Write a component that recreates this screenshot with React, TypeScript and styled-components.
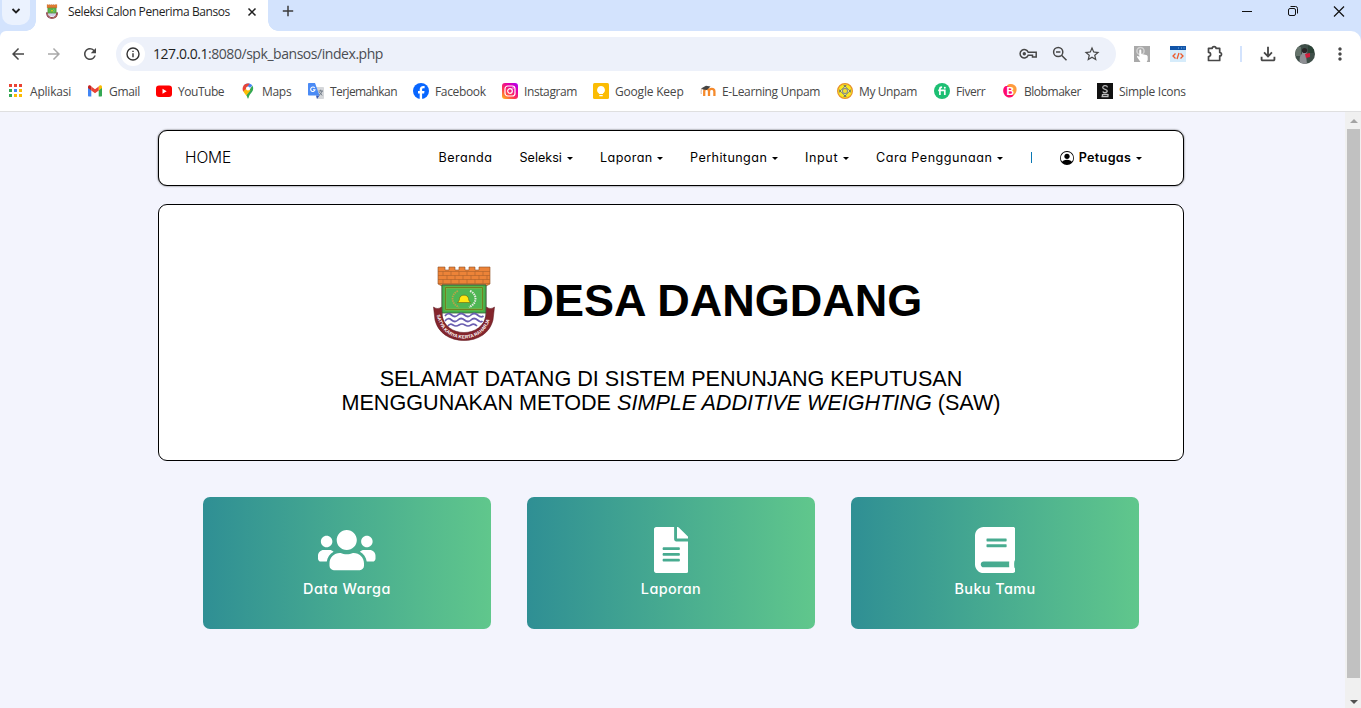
import React from "react";
import styled, { createGlobalStyle, css } from "styled-components";
import { FaBook, FaFileAlt, FaUsers } from "react-icons/fa";
import { BsPersonCircle } from "react-icons/bs";
import {
  MdArrowBack,
  MdArrowForward,
  MdMoreVert,
  MdOutlineFileDownload,
  MdRefresh,
  MdStarOutline,
} from "react-icons/md";

const UI_FONT = `"Open Sans", "Noto Sans", sans-serif`;
const PAGE_FONT = `Inter, "Open Sans", sans-serif`;

const GlobalStyle = createGlobalStyle`
  *, *::before, *::after { box-sizing: border-box; }
  body { margin: 0; overflow: hidden; font-family: ${UI_FONT}; }
  svg { display: block; flex: none; }
  h1, h2, p { margin: 0; }
`;

const Window = styled.div`
  display: flex;
  flex-direction: column;
  width: 1361px;
  height: 708px;
  background: #d3e3fd;
`;

/* ---------- Tab strip ---------- */

const TabStrip = styled.header`
  display: flex;
  height: 31px;
  flex: none;
`;

const TabSearch = styled.button`
  display: grid;
  place-items: center;
  width: 28px;
  height: 25px;
  margin: 0 6px 0 2px;
  padding: 0 0 3px;
  border: 0;
  border-radius: 0 0 10px 10px;
  background: #ebf2fe;
`;

const Tab = styled.div`
  position: relative;
  display: flex;
  align-items: center;
  width: 232px;
  height: 31px;
  padding: 0 11px 8px 10px;
  background: #fff;

  &::before,
  &::after {
    content: "";
    position: absolute;
    bottom: 0;
    width: 10px;
    height: 10px;
  }
  &::before {
    left: -10px;
    background: radial-gradient(circle at 0 0, transparent 9.5px, #fff 10px);
  }
  &::after {
    right: -10px;
    background: radial-gradient(circle at 100% 0, transparent 9.5px, #fff 10px);
  }
`;

const TabTitle = styled.span`
  width: 181px;
  margin-left: 10px;
  padding-top: 1px;
  color: #1f1f1f;
  font-size: 12px;
  line-height: 18px;
  letter-spacing: -0.4px;
  white-space: nowrap;
`;

const TabGap = styled.div`
  width: 14px;
`;

const NewTab = styled.div`
  flex: 1;
  padding-top: 5px;
`;

const WindowControls = styled.div`
  display: flex;
  gap: 34px;
  padding: 5px 16px 0 0;
`;

/* ---------- Toolbar ---------- */

const Chrome = styled.div`
  flex: none;
  height: 81px;
  border-bottom: 1px solid #dfdfe0;
  border-radius: 6px 10px 0 0;
  background: #fff;
`;

const Toolbar = styled.div`
  display: flex;
  align-items: center;
  height: 46px;
  color: #474747;
`;

const NavButtons = styled.div`
  display: flex;
  gap: 18px;
  width: 116px;
  padding-left: 9px;
`;

const Dim = styled.span`
  color: #a9a9a9;
`;

const AddressBar = styled.div`
  display: flex;
  align-items: center;
  width: 1000px;
  height: 34px;
  padding: 0 15px 0 5px;
  border-radius: 17px;
  background: #edf1fa;
`;

const SiteInfo = styled.span`
  display: grid;
  place-items: center;
  width: 24px;
  height: 24px;
  border-radius: 50%;
  background: #fff;
`;

const Url = styled.span`
  flex: 1;
  margin-left: 8px;
  color: #4a4d52;
  font-size: 14px;
  line-height: 20px;
  letter-spacing: -0.45px;
  white-space: nowrap;
`;

const Host = styled.span`
  color: #1f1f1f;
`;

const AddressActions = styled.span`
  display: flex;
  align-items: center;
  gap: 15px;
`;

const Extensions = styled.div`
  display: flex;
  align-items: center;
  gap: 20px;
  padding-left: 18px;
`;

const ToolDivider = styled.i`
  width: 2px;
  height: 16px;
  margin: 0 15px 0 16px;
  background: #d3e3fd;
`;

const EndTools = styled.div`
  display: flex;
  align-items: center;
  gap: 15.5px;
`;

/* ---------- Bookmarks ---------- */

const Bookmarks = styled.nav`
  display: flex;
  gap: 16px;
  height: 28px;
  padding-left: 8px;
`;

const Bookmark = styled.a`
  display: flex;
  align-items: center;
  gap: 6px;
`;

const BookmarkText = styled.span<{ $width: number; $tracking: number }>`
  width: ${(p) => p.$width}px;
  padding-top: 1px;
  color: #474747;
  font-size: 12px;
  line-height: 16px;
  letter-spacing: ${(p) => p.$tracking}px;
  white-space: nowrap;
`;

/* ---------- Page ---------- */

const Viewport = styled.div`
  display: flex;
  flex: 1;
  min-height: 0;
  background: #f3f4fd;
`;

const Page = styled.main`
  flex: 1;
  padding: 18px 0 0 158px;
  color: #000;
  font-family: ${PAGE_FONT};
  font-feature-settings: "cv11";
`;

const panel = css`
  width: 1026px;
  border: 1px solid #000;
  border-radius: 9px;
  background: #fff;
`;

const Navbar = styled.nav`
  ${panel}
  display: flex;
  align-items: center;
  height: 56px;
  padding: 0 41px 0 26px;
  box-shadow: 0 0 2px rgba(0, 0, 0, 0.75);
`;

const Brand = styled.a`
  width: 253.5px;
  padding-bottom: 2px;
  font-size: 15.6px;
  font-weight: 350;
  letter-spacing: -0.15px;
`;

const MenuItem = styled.a<{ $width: number; $tracking: number; $last?: boolean }>`
  display: flex;
  align-items: center;
  justify-content: space-between;
  width: ${(p) => p.$width}px;
  margin-right: ${(p) => (p.$last ? 0 : 27)}px;
  font-size: 12.6px;
  font-weight: ${(p) => (p.$last ? 600 : 370)};
  line-height: 20px;
  letter-spacing: ${(p) => p.$tracking}px;
  white-space: nowrap;
`;

const Caret = styled.i`
  border: 3px solid transparent;
  border-top-color: #000;
  border-bottom: 0;
`;

const MenuDivider = styled.i`
  width: 1px;
  height: 11px;
  margin: 0 28px 2px 1px;
  background: #0a78b4;
`;

const Hero = styled.section`
  ${panel}
  height: 257px;
  margin-top: 18px;
  padding-top: 61px;
  font-family: "Liberation Sans", Arial, sans-serif;
`;

const HeroHeading = styled.div`
  display: flex;
  align-items: center;
  padding-left: 274px;
`;

const HeroTitle = styled.h1`
  padding-bottom: 5px;
  margin-left: 26.5px;
  font-size: 45px;
  line-height: 54px;
  white-space: nowrap;
`;

const Welcome = styled.p`
  margin-top: 26px;
  font-size: 21.6px;
  line-height: 24px;
  text-align: center;
`;

const Cards = styled.section`
  display: flex;
  gap: 36px;
  margin-top: 36px;
  padding-left: 45px;
`;

const Card = styled.a<{ $iconWidth: number }>`
  display: flex;
  flex-direction: column;
  align-items: center;
  width: 288px;
  height: 132px;
  padding-top: 30px;
  border-radius: 7px;
  background: linear-gradient(90deg, #2f8f94, #60c78c);
  color: #fff;

  svg {
    width: ${(p) => p.$iconWidth}px;
    height: 46px;
  }
`;

const CardLabel = styled.span<{ $tracking: number }>`
  margin-top: 5px;
  font-size: 14.4px;
  font-weight: 450;
  line-height: 22px;
  letter-spacing: ${(p) => p.$tracking}px;
`;

const Scrollbar = styled.div`
  display: flex;
  flex-direction: column;
  align-items: center;
  width: 16px;
  height: 100%;
  padding: 7px 0 4px 1px;
  background: #f0f0f0;
`;

const ScrollThumb = styled.div`
  width: 13px;
  height: 549px;
  margin: 6px 0 auto;
  background: #c1c1c1;
`;

const ScrollArrow = styled.i<{ $down?: boolean }>`
  border: 4px solid transparent;
  ${(p) =>
    p.$down
      ? css`
          border-top-color: #505050;
          border-bottom: 0;
        `
      : css`
          border-bottom-color: #a3a3a3;
          border-top: 0;
        `}
`;

/* ---------- Drawings ---------- */

const Emblem = ({ width, height }: { width: number; height: number }) => (
  <svg width={width} height={height} viewBox="0 0 62 75">
    <path
      d="M5 1h7v3h4V1h6v3h4V1h6v3h4V1h6v3h4V1h11v17l-4 2H9l-4-2z"
      fill="#ec8338"
      stroke="#8d4f22"
      strokeWidth=".6"
    />
    <path
      d="M5 5.500h52M5 9.500h52M5 13.500h52M5 17.500h52M10 5.500v4m8-4v4m8-4v4m8-4v4m8-4v4m8-4v4M14 9.500v4m8-4v4m8-4v4m8-4v4m8-4v4m8-4v4M10 13.500v4m8-4v4m8-4v4m8-4v4m8-4v4m8-4v4"
      stroke="#a9602c"
      strokeWidth=".6"
    />
    <path d="M9 19h44v27c0 14-9 22-22 25-13-3-22-11-22-25z" fill="#fff" stroke="#666" strokeWidth=".8" />
    <path d="M9 19h44v28H9z" fill="#43b04c" stroke="#3b5b32" strokeWidth=".8" />
    <path d="M12.500 21.500h37v22h-37z" fill="#4fb654" stroke="#b9bf2c" strokeWidth="1.300" />
    <path d="M12.500 21.500h37v22h-37z" fill="none" stroke="#25401b" strokeWidth=".5" />
    <path d="M25 25c-7.500 3-7.500 13 1 16" fill="none" stroke="#b9a347" strokeWidth="1.800" strokeDasharray="1.500 .8" />
    <path d="M37 25c7.500 3 7.500 13-1 16" fill="none" stroke="#e6ece2" strokeWidth="2" strokeDasharray="1.500 .8" />
    <path d="M24.500 36.500c1-1 2-2 2-4 .5-4.500 8.500-4.500 9 0 0 2 1 3 2 4z" fill="#ffe713" stroke="#6a6412" strokeWidth=".6" />
    <path
      d="M12 50q3-4 6.500-1t6.500 0 6.500 0 6.500 0 6.500 0 6 1M12 55q3-4 6.500-1t6.500 0 6.500 0 6.500 0 6.500 0 5 1M15 60q2-3 5-1t6 0 6 0 6 0 6 1"
      fill="none"
      stroke="#6a5eb0"
      strokeWidth="1.700"
    />
    <path
      d="M.5 41c3 2 5 2 8 0l.5 9c2 10 11 16.500 22 16.500S51 60 53 50l.5-9c3 2 5 2 8 0L60 54C57 67 45 74.500 31 74.500S5 67 2 54z"
      fill="#84252c"
      stroke="#5a171c"
      strokeWidth=".5"
    />
    <path id="ribbon" d="M3.500 48C7 65 18 72.500 31 72.500s24-7.500 27.500-24.500" fill="none" />
    <text fill="#fff" fontSize="4.700" fontWeight="700" fontFamily="Liberation Sans, sans-serif">
      <textPath href="#ribbon" startOffset="1">SATYA KARYA KERTA RAHARJA</textPath>
    </text>
  </svg>
);

const AppsIcon = () => (
  <svg width="16" height="16" viewBox="0 0 16 16">
    {["#ea4335", "#ea4335", "#ea4335", "#34a853", "#4285f4", "#fbbc04", "#34a853", "#fbbc04", "#fbbc04"].map((fill, i) => (
      <rect key={i} x={1 + (i % 3) * 5} y={1 + Math.floor(i / 3) * 5} width="3" height="3" fill={fill} />
    ))}
  </svg>
);

const GmailIcon = () => (
  <svg width="16" height="16" viewBox="0 0 16 16">
    <path d="M1 4v8.500c0 .6.4 1 1 1h2.300V7z" fill="#4285f4" />
    <path d="M15 4v8.500c0 .6-.4 1-1 1h-2.300V7z" fill="#34a853" />
    <path d="M11.700 3.500V7.500L15 5V3.800c0-1.500-1.600-2-2.500-1.200z" fill="#fbbc04" />
    <path d="M4.300 7.500v-4L8 6.200l3.700-2.700v4L8 10.300z" fill="#ea4335" />
    <path d="M1 3.800V5l3.300 2.500v-4l-.8-.9C2.600 1.800 1 2.300 1 3.800z" fill="#c5221f" />
  </svg>
);

const YouTubeIcon = () => (
  <svg width="16" height="16" viewBox="0 0 16 16">
    <rect y="2.500" width="16" height="11.500" rx="3" fill="#f00" />
    <path d="M6.500 5.800v5l4.200-2.500z" fill="#fff" />
  </svg>
);

const MapsIcon = () => (
  <svg width="16" height="16" viewBox="0 0 16 16">
    <path d="M12.300 2.500c1.600 2.500.9 4.800-.4 6.600-1.200 1.700-2.800 3.300-3.400 5.900-.2.800-.8.800-1 0-.2-1-.7-2-1.300-2.800z" fill="#34a853" />
    <path d="M3.200 8.300 6.500 5l4 2.500-4.300 5C5.300 11 4 9.900 3.200 8.300z" fill="#fbbc04" />
    <path d="M3.900 2.300 6.800 5l-3.600 3.600C2.200 6.600 2.400 4.100 3.900 2.300z" fill="#ea4335" />
    <path d="M3.800 2.400C5.800 0 10.200-.2 12.200 2.500L9 6 6.600 4.800z" fill="#4285f4" />
    <path d="M3.700 2.500 6.500 5 9.600.8C7.300.1 5 .9 3.700 2.500z" fill="#ea4335" />
    <circle cx="8" cy="5.500" r="2" fill="#fff" />
  </svg>
);

const TranslateIcon = () => (
  <svg width="16" height="16" viewBox="0 0 16 16">
    <path d="M7 4h8.200c.5 0 .8.300.8.800v10.400c0 .5-.3.800-.8.800H9z" fill="#d5d7da" />
    <path d="M8 12.500h3.500L9 16z" fill="#3457b5" />
    <path d="M.8 0H7l4.500 12.500H.8c-.5 0-.8-.3-.8-.8V.8C0 .3.300 0 .8 0z" fill="#4b8bf5" />
    <path d="M6.700 5A2.200 2.200 0 1 0 7 6.800H5" fill="none" stroke="#fff" strokeWidth="1.100" />
    <path d="M10.500 8h4.500M12.700 6.700V8M14 8c-.3 2-1.500 3.400-3 4.300M11.500 9c.5 1.500 1.500 2.500 2.800 3.300" fill="none" stroke="#66727f" strokeWidth=".9" />
  </svg>
);

const FacebookIcon = () => (
  <svg width="16" height="16" viewBox="0 0 16 16">
    <circle cx="8" cy="8" r="8" fill="#0866ff" />
    <path d="M6.700 16v-5.500H5V8h1.700V6.800c0-2.700 1.200-3.900 3.800-3.900l1.100.1v2.300h-.9c-1.200 0-1.600.4-1.600 1.500V8h2.400l-.4 2.500h-2V16z" fill="#fff" />
  </svg>
);

const InstagramIcon = () => (
  <svg width="16" height="16" viewBox="0 0 16 16">
    <defs>
      <linearGradient id="insta" x1="0" y1="1" x2=".8" y2="0">
        <stop offset="0" stopColor="#ffc21a" />
        <stop offset=".4" stopColor="#ff3b4e" />
        <stop offset=".75" stopColor="#e600a5" />
        <stop offset="1" stopColor="#b600e8" />
      </linearGradient>
    </defs>
    <rect width="16" height="16" rx="3" fill="url(#insta)" />
    <rect x="3" y="3" width="10" height="10" rx="2.800" fill="none" stroke="#fff" strokeWidth="1.200" />
    <circle cx="8" cy="8" r="2.300" fill="none" stroke="#fff" strokeWidth="1.200" />
    <circle cx="11" cy="5" r=".7" fill="#fff" />
  </svg>
);

const KeepIcon = () => (
  <svg width="16" height="16" viewBox="0 0 16 16">
    <rect width="16" height="16" rx="1.500" fill="#fbbc04" />
    <path d="M8 3a4 4 0 0 0-2 7.400V11h4v-.6A4 4 0 0 0 8 3zM6.300 12h3.400v1.200H6.300z" fill="#fff" />
  </svg>
);

const MoodleIcon = () => (
  <svg width="16" height="16" viewBox="0 0 16 16">
    <path d="M4.200 13V8.500c0-3.500 4.800-3.500 4.800 0V13m0-4.500c0-3.500 5.400-3.500 5.400 0V13" fill="none" stroke="#f58a2c" strokeWidth="2.300" />
    <path d="M1 5.500 6 2.700l4.500.8L6.800 7 3 6.500z" fill="#444" />
    <path d="M1.800 5.500C1 7 1 9 1.300 11" fill="none" stroke="#c9a58b" strokeWidth=".8" />
  </svg>
);

const UnpamIcon = () => (
  <svg width="16" height="16" viewBox="0 0 16 16">
    <circle cx="8" cy="8" r="7.400" fill="#f7e820" stroke="#e8902b" strokeWidth="1.200" />
    <path d="M8 3 13 8 8 13 3 8z" fill="#f3e97a" stroke="#a3a05c" strokeWidth="1" />
    <circle cx="8" cy="8" r="2.600" fill="#f6e22b" stroke="#8c9187" strokeWidth="1.100" />
    <path d="M6.300 2.300h3.400L8 4.200zM6.300 13.700h3.400L8 11.800zM2.300 6.300v3.400L4.200 8zM13.700 6.300v3.400L11.800 8z" fill="#5c6274" />
  </svg>
);

const FiverrIcon = () => (
  <svg width="16" height="16" viewBox="0 0 16 16">
    <circle cx="8" cy="8" r="8" fill="#1dbf73" />
    <path d="M5.900 12V5.800c0-1.200.6-1.600 2.200-1.600M4.200 7.300h6.600V12" fill="none" stroke="#fff" strokeWidth="1.700" />
    <circle cx="10.800" cy="4.700" r="1" fill="#fff" />
  </svg>
);

const BlobIcon = () => (
  <svg width="16" height="16" viewBox="0 0 16 16">
    <path d="M5 2.500C8 0 13 1 14.300 4.500c1 3-.5 7-4.300 9z" fill="#ff9a3d" />
    <path d="M2 4.500C4 2 6.500 3 8 5s3.500 4 3.500 6.500-3.500 4-6.500 2.500S0 8 2 4.500z" fill="#ff0a6c" />
    <text x="4.500" y="11.800" fill="#fff" fontSize="10.500" fontWeight="700" fontFamily="Liberation Sans, sans-serif">B</text>
  </svg>
);

const SimpleIconsIcon = () => (
  <svg width="16" height="16" viewBox="0 0 16 16">
    <path d="M0 0h16v16H0z" fill="#111" />
    <path d="M10.500 4.300C10 1.800 5.500 2 5.800 4.700c.2 2 4.700 1.300 4.500 3.500-.3 1.800-4 1.800-4.500.3M4.500 13.500h7M6 11.300h4.500M5.500 11v2.500M11 11v2.500" fill="none" stroke="#bbb" strokeWidth="1.300" />
  </svg>
);

const line = { fill: "none", stroke: "currentColor" } as const;

const ChevronIcon = () => (
  <svg width="10" height="8" viewBox="0 0 10 8" {...line} stroke="#1f1f1f" strokeWidth="1.800">
    <path d="m1.500 2 3.500 3.500L8.500 2" />
  </svg>
);

const CloseTabIcon = () => (
  <svg width="10" height="10" viewBox="0 0 10 10" {...line} stroke="#1f1f1f" strokeWidth="1.500">
    <path d="m1.500 1.500 7 7m0-7-7 7" />
  </svg>
);

const PlusIcon = () => (
  <svg width="12" height="12" viewBox="0 0 12 12" {...line} stroke="#3c3c3c" strokeWidth="1.500">
    <path d="M6 .8v10.400M.8 6h10.400" />
  </svg>
);

const MinimizeIcon = () => (
  <svg width="12" height="12" viewBox="0 0 12 12" {...line} stroke="#111">
    <path d="M1 6.500h10" />
  </svg>
);

const RestoreIcon = () => (
  <svg width="12" height="12" viewBox="0 0 12 12" {...line} stroke="#111">
    <rect x="1.500" y="3.500" width="7" height="7" rx="1.500" />
    <path d="M3.500 1.500h5a2 2 0 0 1 2 2v5" />
  </svg>
);

const CloseWindowIcon = () => (
  <svg width="12" height="12" viewBox="0 0 12 12" {...line} stroke="#111" strokeWidth="1.200">
    <path d="m1 1.500 10 10m0-10-10 10" />
  </svg>
);

const InfoIcon = () => (
  <svg width="14" height="14" viewBox="0 0 14 14" {...line} stroke="#333" strokeWidth="1.400">
    <circle cx="7" cy="7" r="6" />
    <path d="M7 6.300v4M7 3.700v1.400" />
  </svg>
);

const KeyIcon = () => (
  <svg width="18" height="12" viewBox="0 0 18 12" {...line} strokeWidth="1.500">
    <path d="M9.200 4.300H17.200v4.700h-3.700V7.300H9.200a4.200 4.200 0 1 1 0-3z" />
    <circle cx="5.300" cy="5.800" r="1.700" fill="currentColor" stroke="none" />
  </svg>
);

const ZoomOutIcon = () => (
  <svg width="16" height="16" viewBox="0 0 16 16" {...line} strokeWidth="1.500">
    <circle cx="6.200" cy="6" r="4.600" />
    <path d="m9.500 9.300 5 5M4 6h4.400" />
  </svg>
);

const ClickerIcon = () => (
  <svg width="16" height="16" viewBox="0 0 16 16">
    <path d="M0 0h16v16H0z" fill="#a9a9a9" />
    <circle cx="6.500" cy="5" r="3.600" fill="none" stroke="#d3d3d3" strokeWidth="1.500" />
    <path d="M5.300 4.500c0-1.500 2-1.500 2 0V8l5 1c1 .3 1.400 1 1.400 1.800V14l-1 2H6.500L3 11c-.3-.8.8-1.500 1.400-.8l.9.800z" fill="#fff" />
  </svg>
);

const CodeIcon = () => (
  <svg width="16" height="16" viewBox="0 0 16 16">
    <path d="M0 0h16v16H0z" fill="#d6ecfb" />
    <path d="M0 0h16v4H0z" fill="#1154a8" />
    <path d="M8 2h1M11 2h1M13.500 2h1" stroke="#74b4ee" />
    <path d="M5.500 7.500 3 10l2.500 2.500m5-5L13 10l-2.500 2.500M9 7l-2 6" fill="none" stroke="#ed5a2b" strokeWidth="1.300" />
  </svg>
);

const PuzzleIcon = () => (
  <svg width="18" height="18" viewBox="0 0 18 18" {...line} strokeWidth="1.700" strokeLinejoin="round">
    <path d="M2.500 3.300h3.700a1.900 1.700 0 0 1 3.800 0h3.700v4.200a1.800 1.700 0 0 1 0 3.400v4.600H2.500v-4a2.100 2.100 0 0 0 0-4.200z" />
  </svg>
);

const Avatar = () => (
  <svg width="20" height="20" viewBox="0 0 20 20">
    <defs>
      <clipPath id="avatar"><circle cx="10" cy="10" r="10" /></clipPath>
    </defs>
    <g clipPath="url(#avatar)">
      <path d="M0 0h20v20H0z" fill="#3f4f49" />
      <path d="M0 3h6v9H0z" fill="#65736b" />
      <path d="M13 2h6v7h-6z" fill="#2c4337" />
      <path d="M7 7c1-3 5-2 5 1l-1 3 1 9H5c-1-5 0-9 2-10z" fill="#8e8f94" />
      <circle cx="9.500" cy="6.500" r="2.600" fill="#2a2426" />
      <path d="m10 10 5-1v4l-4 1z" fill="#d31c3c" />
    </g>
  </svg>
);

/* ---------- Data ---------- */

type BookmarkData = [string, React.FC, number, number];

const bookmarks: BookmarkData[] = [
  ["Aplikasi", AppsIcon, 41, -0.21],
  ["Gmail", GmailIcon, 31, -0.3],
  ["YouTube", YouTubeIcon, 46, -0.46],
  ["Maps", MapsIcon, 30, -0.3],
  ["Terjemahkan", TranslateIcon, 67, -0.6],
  ["Facebook", FacebookIcon, 51, -0.34],
  ["Instagram", InstagramIcon, 53, -0.4],
  ["Google Keep", KeepIcon, 69, -0.2],
  ["E-Learning Unpam", MoodleIcon, 99, -0.36],
  ["My Unpam", UnpamIcon, 59, -0.4],
  ["Fiverr", FiverrIcon, 30, -0.42],
  ["Blobmaker", BlobIcon, 57, -0.46],
  ["Simple Icons", SimpleIconsIcon, 67, -0.3],
];

const menu: [string, number, number][] = [
  ["Seleksi", 53.5, 0],
  ["Laporan", 63, 0.4],
  ["Perhitungan", 88, 0.42],
  ["Input", 44, 0.6],
  ["Cara Penggunaan", 127, 0.52],
];

export default function App() {
  return (
    <Window>
      <GlobalStyle />
      <TabStrip>
        <TabSearch aria-label="Search tabs"><ChevronIcon /></TabSearch>
        <Tab>
          <Emblem width={12} height={15} />
          <TabTitle>Seleksi Calon Penerima Bansos</TabTitle>
          <CloseTabIcon />
        </Tab>
        <TabGap />
        <NewTab><PlusIcon /></NewTab>
        <WindowControls>
          <MinimizeIcon />
          <RestoreIcon />
          <CloseWindowIcon />
        </WindowControls>
      </TabStrip>

      <Chrome>
        <Toolbar>
          <NavButtons>
            <MdArrowBack size={18} />
            <Dim><MdArrowForward size={18} /></Dim>
            <MdRefresh size={18} />
          </NavButtons>
          <AddressBar>
            <SiteInfo><InfoIcon /></SiteInfo>
            <Url><Host>127.0.0.1</Host>:8080/spk_bansos/index.php</Url>
            <AddressActions>
              <KeyIcon />
              <ZoomOutIcon />
              <MdStarOutline size={18} />
            </AddressActions>
          </AddressBar>
          <Extensions>
            <ClickerIcon />
            <CodeIcon />
            <PuzzleIcon />
          </Extensions>
          <ToolDivider />
          <EndTools>
            <MdOutlineFileDownload size={22} />
            <Avatar />
            <MdMoreVert size={20} />
          </EndTools>
        </Toolbar>
        <Bookmarks>
          {bookmarks.map(([label, Icon, width, tracking]) => (
            <Bookmark key={label}>
              <Icon />
              <BookmarkText $width={width} $tracking={tracking}>{label}</BookmarkText>
            </Bookmark>
          ))}
        </Bookmarks>
      </Chrome>

      <Viewport>
        <Page>
          <Navbar>
            <Brand>HOME</Brand>
            <MenuItem $width={54} $tracking={0.46}>Beranda</MenuItem>
            {menu.map(([label, width, tracking]) => (
              <MenuItem key={label} $width={width} $tracking={tracking}>
                {label}
                <Caret />
              </MenuItem>
            ))}
            <MenuDivider />
            <MenuItem $width={82} $tracking={0.34} $last>
              <BsPersonCircle size={14} />
              Petugas
              <Caret />
            </MenuItem>
          </Navbar>

          <Hero>
            <HeroHeading>
              <Emblem width={62} height={75} />
              <HeroTitle>DESA DANGDANG</HeroTitle>
            </HeroHeading>
            <Welcome>
              SELAMAT DATANG DI SISTEM PENUNJANG KEPUTUSAN
              <br />
              MENGGUNAKAN METODE <em>SIMPLE ADDITIVE WEIGHTING</em> (SAW)
            </Welcome>
          </Hero>

          <Cards>
            <Card $iconWidth={57.5}>
              <FaUsers />
              <CardLabel $tracking={0.56}>Data Warga</CardLabel>
            </Card>
            <Card $iconWidth={34.5}>
              <FaFileAlt />
              <CardLabel $tracking={0.4}>Laporan</CardLabel>
            </Card>
            <Card $iconWidth={40.25}>
              <FaBook />
              <CardLabel $tracking={0.44}>Buku Tamu</CardLabel>
            </Card>
          </Cards>
        </Page>
        <Scrollbar>
          <ScrollArrow />
          <ScrollThumb />
          <ScrollArrow $down />
        </Scrollbar>
      </Viewport>
    </Window>
  );
}
